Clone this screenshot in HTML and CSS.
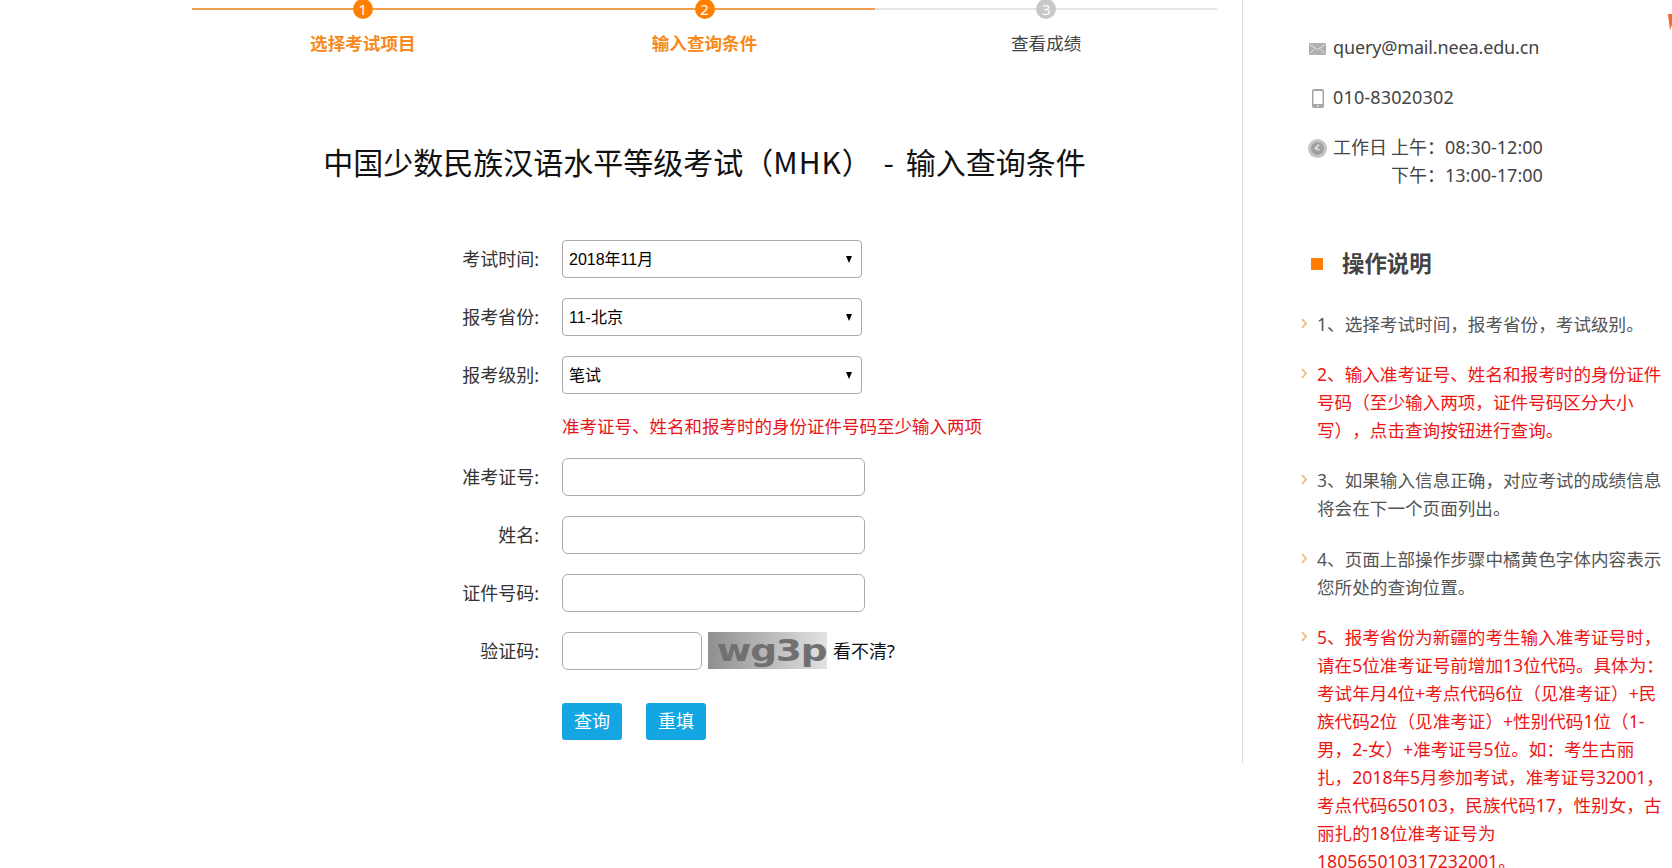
FILE: index.html
```html
<!DOCTYPE html>
<html lang="zh-CN">
<head>
<meta charset="utf-8">
<title>中国少数民族汉语水平等级考试（MHK） - 输入查询条件</title>
<link rel="stylesheet" href="styles.css">
</head>
<body>
<div class="page">
  <main class="main">
    <ol class="steps">
      <li class="step done"><span class="step-num">1</span><span class="step-label">选择考试项目</span></li>
      <li class="step done"><span class="step-num">2</span><span class="step-label">输入查询条件</span></li>
      <li class="step"><span class="step-num">3</span><span class="step-label">查看成绩</span></li>
    </ol>
    <h1 class="title">中国少数民族汉语水平等级考试（<span class="title-code">MHK</span>） - 输入查询条件</h1>
    <form class="form">
      <div class="row">
        <label class="label">考试时间:</label>
        <div class="select-wrap"><select class="select"><option>2018年11月</option></select></div>
      </div>
      <div class="row">
        <label class="label">报考省份:</label>
        <div class="select-wrap"><select class="select"><option>11-北京</option></select></div>
      </div>
      <div class="row">
        <label class="label">报考级别:</label>
        <div class="select-wrap"><select class="select"><option>笔试</option></select></div>
      </div>
      <p class="note">准考证号、姓名和报考时的身份证件号码至少输入两项</p>
      <div class="row">
        <label class="label">准考证号:</label>
        <input class="input" type="text">
      </div>
      <div class="row">
        <label class="label">姓名:</label>
        <input class="input" type="text">
      </div>
      <div class="row">
        <label class="label">证件号码:</label>
        <input class="input" type="text">
      </div>
      <div class="row">
        <label class="label">验证码:</label>
        <input class="input input-code" type="text">
        <div class="captcha"><span class="captcha-text">wg3p</span></div>
        <a class="refresh">看不清?</a>
      </div>
      <div class="buttons">
        <button class="btn" type="button">查询</button>
        <button class="btn" type="button">重填</button>
      </div>
    </form>
  </main>
  <aside class="side">
    <ul class="contact">
      <li class="contact-item">
        <span class="contact-icon">
          <svg width="17" height="12" viewBox="0 0 17 12"><rect width="17" height="12" rx="1" fill="#b0b0b0"/><path d="M1 1.500l7.500 5 7.500-5M1 10.500l5-5M16 10.500l-5-5" fill="none" stroke="#e4e4e4" stroke-width="1"/></svg>
        </span>
        <span class="email">query@mail.neea.edu.cn</span>
      </li>
      <li class="contact-item">
        <span class="contact-icon">
          <svg width="12" height="19" viewBox="0 0 12 19"><rect width="12" height="19" rx="2" fill="#a4a4a4"/><rect x="1.500" y="2" width="9" height="13" fill="#fff"/><circle cx="6" cy="17" r="1" fill="#e8e8e8"/></svg>
        </span>
        <span class="phone">010-83020302</span>
      </li>
      <li class="contact-item">
        <span class="contact-icon">
          <svg width="19" height="19" viewBox="0 0 19 19"><circle cx="9.500" cy="9.500" r="9.500" fill="#c4c4c4"/><circle cx="9.500" cy="9.500" r="6.500" fill="#a0a0a0"/><path d="M11 5.500L7.500 9.500l4 1.500" fill="none" stroke="#e4e4e4" stroke-width="1.600"/></svg>
        </span>
        <span class="hours">
          <span class="hours-line"><span class="hours-day">工作日 </span><span>上午：08:30-12:00</span></span>
          <span class="hours-line"><span class="hours-day"></span><span>下午：13:00-17:00</span></span>
        </span>
      </li>
    </ul>
    <h2 class="side-title"><span class="square"></span>操作说明</h2>
    <ul class="help">
      <li class="help-item"><svg class="chev" width="6" height="11" viewBox="0 0 6 11"><path d="M1 1l4 4.500-4 4.500" fill="none" stroke="#eebd78" stroke-width="1.800"/></svg>1、选择考试时间，报考省份，考试级别。</li>
      <li class="help-item red"><svg class="chev" width="6" height="11" viewBox="0 0 6 11"><path d="M1 1l4 4.500-4 4.500" fill="none" stroke="#eebd78" stroke-width="1.800"/></svg>2、输入准考证号、姓名和报考时的身份证件号码（至少输入两项，证件号码区分大小写），点击查询按钮进行查询。</li>
      <li class="help-item"><svg class="chev" width="6" height="11" viewBox="0 0 6 11"><path d="M1 1l4 4.500-4 4.500" fill="none" stroke="#eebd78" stroke-width="1.800"/></svg>3、如果输入信息正确，对应考试的成绩信息将会在下一个页面列出。</li>
      <li class="help-item"><svg class="chev" width="6" height="11" viewBox="0 0 6 11"><path d="M1 1l4 4.500-4 4.500" fill="none" stroke="#eebd78" stroke-width="1.800"/></svg>4、页面上部操作步骤中橘黄色字体内容表示您所处的查询位置。</li>
      <li class="help-item red"><svg class="chev" width="6" height="11" viewBox="0 0 6 11"><path d="M1 1l4 4.500-4 4.500" fill="none" stroke="#eebd78" stroke-width="1.800"/></svg>5、报考省份为新疆的考生输入准考证号时，请在5位准考证号前增加13位代码。具体为：考试年月4位+考点代码6位（见准考证）+民族代码2位（见准考证）+性别代码1位（1-男，2-女）+准考证号5位。如：考生古丽扎，2018年5月参加考试，准考证号32001，考点代码650103，民族代码17，性别女，古丽扎的18位准考证号为180565010317232001。</li>
    </ul>
  </aside>
</div>
<div class="corner"></div>
</body>
</html>
```
FILE: styles.css
```css
* { box-sizing: border-box; }
html, body { margin: 0; height: 100%; overflow: hidden; background: #fff; }
body {
  font-family: "Noto Sans", "Noto Sans CJK SC", sans-serif;
  font-size: 17.6px;
  color: #333;
  text-spacing-trim: space-all;
}
ul, ol { list-style: none; margin: 0; padding: 0; }

.page { display: flex; align-items: flex-start; height: 868px; overflow: hidden; }

.main {
  width: 1243px;
  height: 763px;
  flex: none;
  border-right: 1px solid #ddd;
  padding-top: 8px;
}

.steps { display: flex; margin-left: 192px; width: 1025px; }
.step {
  flex: 1;
  position: relative;
  border-top: 2px solid #e4e4e4;
  text-align: center;
  padding-top: 19px;
  color: #444;
}
.step.done { border-top-color: #f0a050; color: #f68a1e; }
.step-num {
  position: absolute;
  left: 50%;
  top: -11px;
  width: 20px;
  height: 20px;
  margin-left: -10px;
  border-radius: 50%;
  background: #c8c8c8;
  color: #fff;
  font-size: 15px;
  line-height: 20px;
}
.step.done .step-num { background: #ff8000; }
.step-label { display: block; font-size: 17.6px; line-height: 28px; }
.step.done .step-label { font-weight: 700; }

.title {
  margin: 82px 0 0;
  padding-left: 167px;
  text-align: center;
  font-size: 30px;
  font-weight: 400;
  line-height: 44px;
  word-spacing: 5px;
  color: #111;
  font-family: "Noto Sans CJK SC", sans-serif;
}
.title-code { letter-spacing: 1px; }

.form { margin-top: 56.500px; }
.row { display: flex; align-items: center; height: 38px; margin-bottom: 20px; }
.label {
  width: 539px;
  margin-right: 23px;
  padding-bottom: 2px;
  text-align: right;
  flex: none;
  color: #333;
  font-size: 18px;
}
.select-wrap { position: relative; width: 300px; height: 38px; }
.select-wrap::after {
  content: "";
  position: absolute;
  right: 10px;
  top: 16px;
  border-left: 3.500px solid transparent;
  border-right: 3.500px solid transparent;
  border-top: 7px solid #000;
  pointer-events: none;
}
.select {
  appearance: none;
  width: 100%;
  height: 100%;
  padding: 2px 0 0 6px;
  border: 1px solid #aaa;
  border-radius: 4px;
  background: #fff;
  color: #000;
  font-family: "Liberation Sans", "Noto Sans CJK SC", sans-serif;
  font-size: 16px;
}
.input {
  width: 303px;
  height: 38px;
  border: 1px solid #aaa;
  border-radius: 6px;
  background: #fff;
  padding: 0 6px;
}
.input-code { width: 140px; }
.note {
  margin: -2px 0 0 562px;
  height: 46px;
  line-height: 28px;
  color: #e8141c;
  font-size: 17.500px;
}
.captcha {
  width: 119px;
  height: 37px;
  margin-left: 6px;
  background: linear-gradient(90deg, #8f8f8f, #e2e2e2);
  overflow: hidden;
  display: flex;
  align-items: center;
  justify-content: center;
}
.captcha-text {
  font-family: "DejaVu Sans", sans-serif;
  font-weight: 700;
  font-size: 30px;
  line-height: 37px;
  letter-spacing: -1px;
  color: #707070;
  transform: scaleX(1.25) translateX(3px);
}
.refresh { margin-left: 6px; padding-bottom: 2px; color: #111; font-size: 18px; }
.buttons { display: flex; gap: 24px; margin-left: 562px; margin-top: 33px; }
.btn {
  width: 60px;
  height: 37px;
  border: 0;
  border-radius: 3px;
  background: #14a5e3;
  color: #fff;
  padding: 0 0 3px;
  font-family: "Noto Sans CJK SC", sans-serif;
  font-size: 18px;
}

.side { flex: 1; min-width: 0; padding: 33px 0 0 58px; position: relative; }
.contact-item { display: flex; line-height: 28px; margin-bottom: 22px; padding-left: 6px; color: #444; font-size: 18px; }
.contact-icon { width: 21px; height: 28px; padding-top: 3px; margin-right: 5px; flex: none; display: flex; align-items: center; justify-content: center; }
.email { letter-spacing: -0.150px; }
.phone { letter-spacing: 0.150px; }
.hours { display: block; }
.hours-line { display: flex; }
.hours-day { width: 58px; white-space: pre; }
.side-title {
  display: flex;
  align-items: center;
  margin: 59.500px 0 31px 10px;
  font-size: 22.400px;
  line-height: 30px;
  font-weight: 700;
  color: #444;
}
.square { width: 12px; height: 12px; background: #ff8000; margin-right: 19px; }
.help-item {
  position: relative;
  padding-left: 16px;
  width: 364px;
  line-height: 28px;
  margin-bottom: 22.400px;
  color: #555;
}
.help-item.red { color: #ee1515; }
.chev { position: absolute; left: 0; top: 8px; }
.corner {
  position: absolute;
  left: 1668px;
  top: 14px;
  width: 0;
  height: 0;
  border-top: 16px solid #f06a30;
  border-left: 2px solid transparent;
  border-right: 6px solid transparent;
}
```
